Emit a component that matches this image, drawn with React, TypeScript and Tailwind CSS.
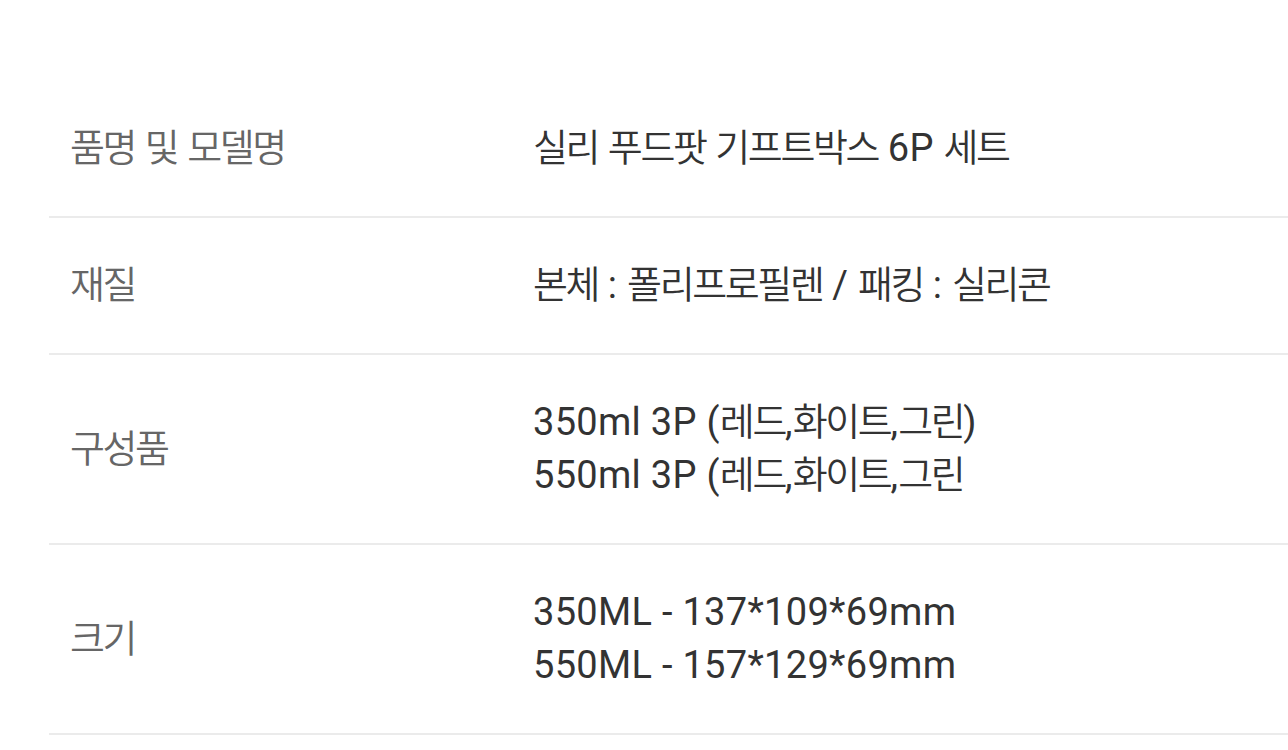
const rows: { label: string; value: string[] }[] = [
  { label: "품명 및 모델명", value: ["실리 푸드팟 기프트박스 6P 세트"] },
  { label: "재질", value: ["본체 : 폴리프로필렌 / 패킹 : 실리콘"] },
  { label: "구성품", value: ["350ml 3P (레드,화이트,그린)", "550ml 3P (레드,화이트,그린"] },
  { label: "크기", value: ["350ML - 137*109*69mm", "550ML - 157*129*69mm"] },
];

// hangul runs are set a little tighter than the latin ones
function Txt({ text }: { text: string }) {
  return (
    <>
      {text.split(/([\uAC00-\uD7A3]+)/).map((part, i) =>
        /[\uAC00-\uD7A3]/.test(part) ? (
          <span key={i} className="tracking-[-2.4px] font-[350]">
            {part}
          </span>
        ) : (
          <span key={i} className="tracking-[0.3px]">
            {part}
          </span>
        )
      )}
    </>
  );
}

export default function App() {
  return (
    <div
      className="min-h-[750px] w-full overflow-hidden bg-white pl-[49px] pt-[81px]"
      style={{ fontFamily: 'Roboto, "Noto Sans CJK KR", sans-serif' }}
    >
      <table className="w-full border-collapse text-[38px] leading-[53px]">
        <tbody>
          {rows.map((r) => (
            <tr key={r.label}>
              <th className="w-[484px] border-b-2 border-[#ebebeb] py-[41px] pl-[21px] text-left align-middle font-normal text-[#666]">
                <Txt text={r.label} />
              </th>
              <td className="border-b-2 border-[#ebebeb] py-[41px] align-middle text-[#333]">
                {r.value.map((v) => (
                  <div key={v}>
                    <Txt text={v} />
                  </div>
                ))}
              </td>
            </tr>
          ))}
        </tbody>
      </table>
    </div>
  );
}
